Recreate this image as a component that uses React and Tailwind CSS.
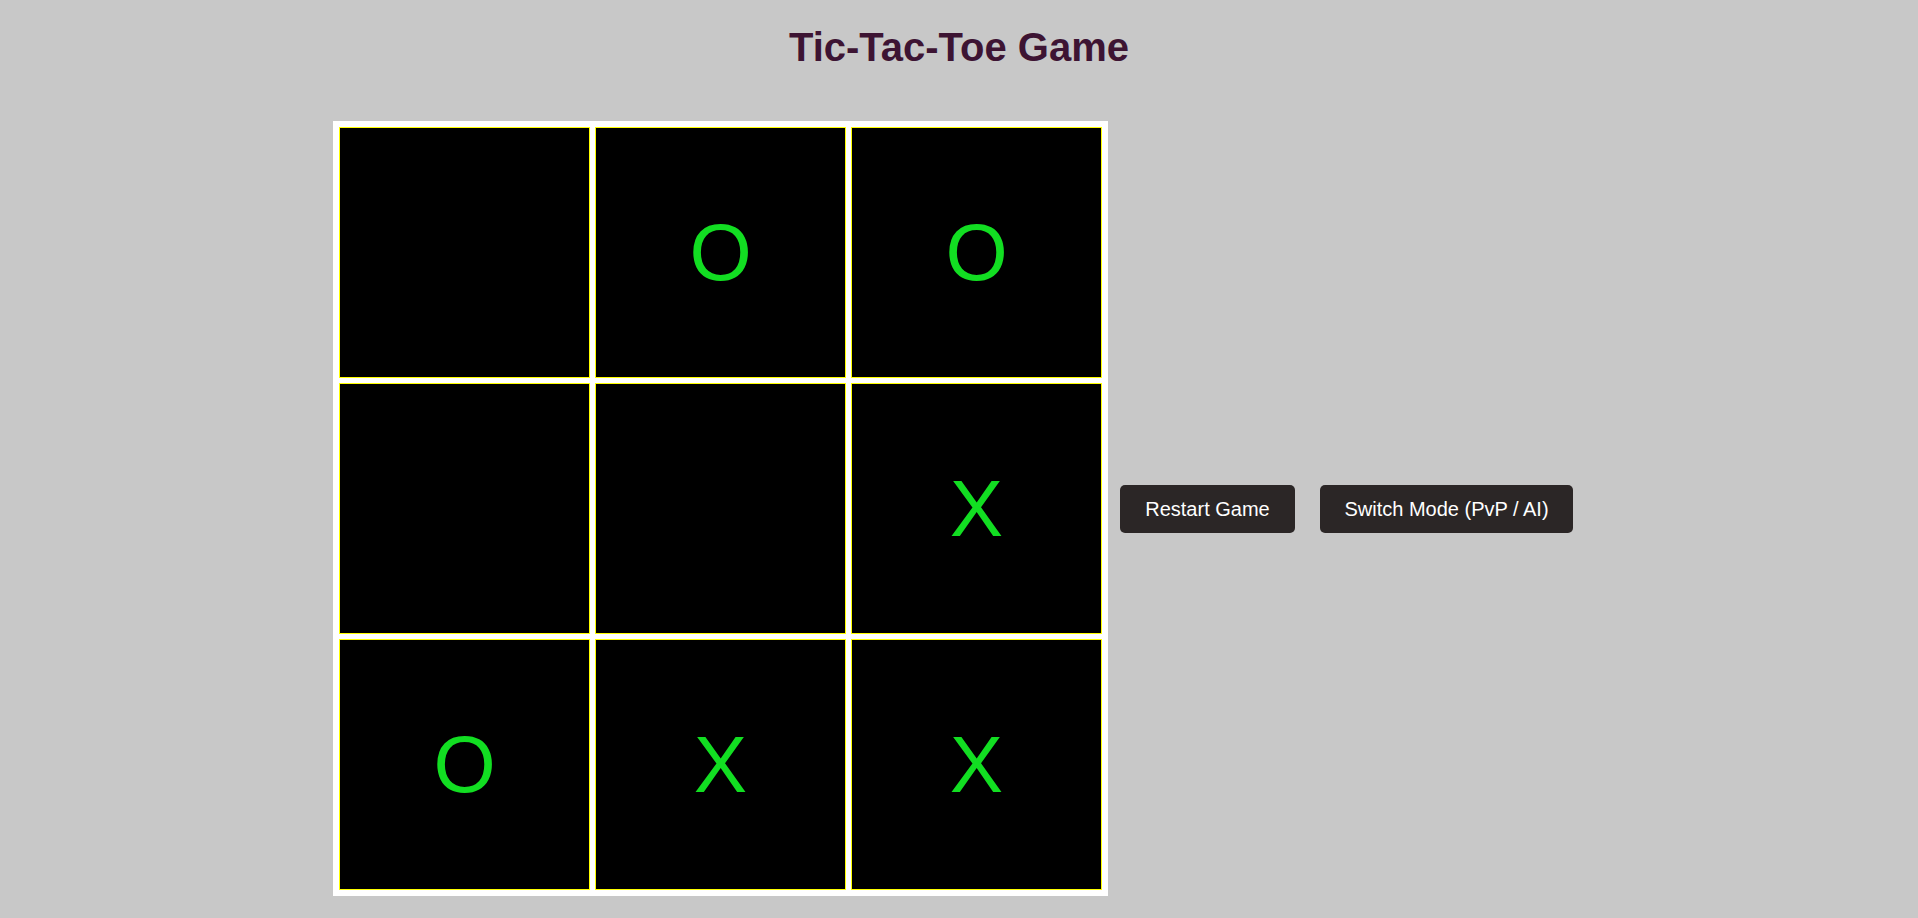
import React, { useState } from 'react';

const START = ['', 'O', 'O', '', '', 'X', 'O', 'X', 'X'];

function App() {
  const [cells, setCells] = useState(START);
  const [mode, setMode] = useState('PvP');

  const handleClick = (i) => {
    if (cells[i]) return;
    const filled = cells.filter(c => c).length;
    const next = [...cells];
    next[i] = filled % 2 === 0 ? 'X' : 'O';
    setCells(next);
  };

  return (
    <div className="min-h-screen bg-[#c8c8c8] pt-[24px] font-['Liberation_Sans',Arial,sans-serif]">
      <h1 className="text-center text-[40px] leading-[46px] font-bold text-[#3d1433]">
        Tic-Tac-Toe Game
      </h1>

      <div className="mt-[51px] flex items-center justify-center">
        <div className="grid grid-cols-[repeat(3,251px)] grid-rows-[repeat(3,251px)] gap-[5px] bg-white p-[6px]">
          {cells.map((cell, i) => (
            <div
              key={i}
              onClick={() => handleClick(i)}
              className="flex items-center justify-center border border-[#ffff00] bg-black text-[80px] leading-none text-[#12de22] cursor-pointer"
            >
              {cell}
            </div>
          ))}
        </div>

        <button
          onClick={() => setCells(Array(9).fill(''))}
          className="ml-3 h-12 w-[175px] rounded-[5px] bg-[#2b2626] text-[20px] text-white"
        >
          Restart Game
        </button>
        <button
          onClick={() => setMode(mode === 'PvP' ? 'AI' : 'PvP')}
          className="ml-[25px] mr-3 h-12 w-[253px] rounded-[5px] bg-[#2b2626] text-[20px] text-white"
        >
          Switch Mode (PvP / AI)
        </button>
      </div>
    </div>
  );
}

export default App;
